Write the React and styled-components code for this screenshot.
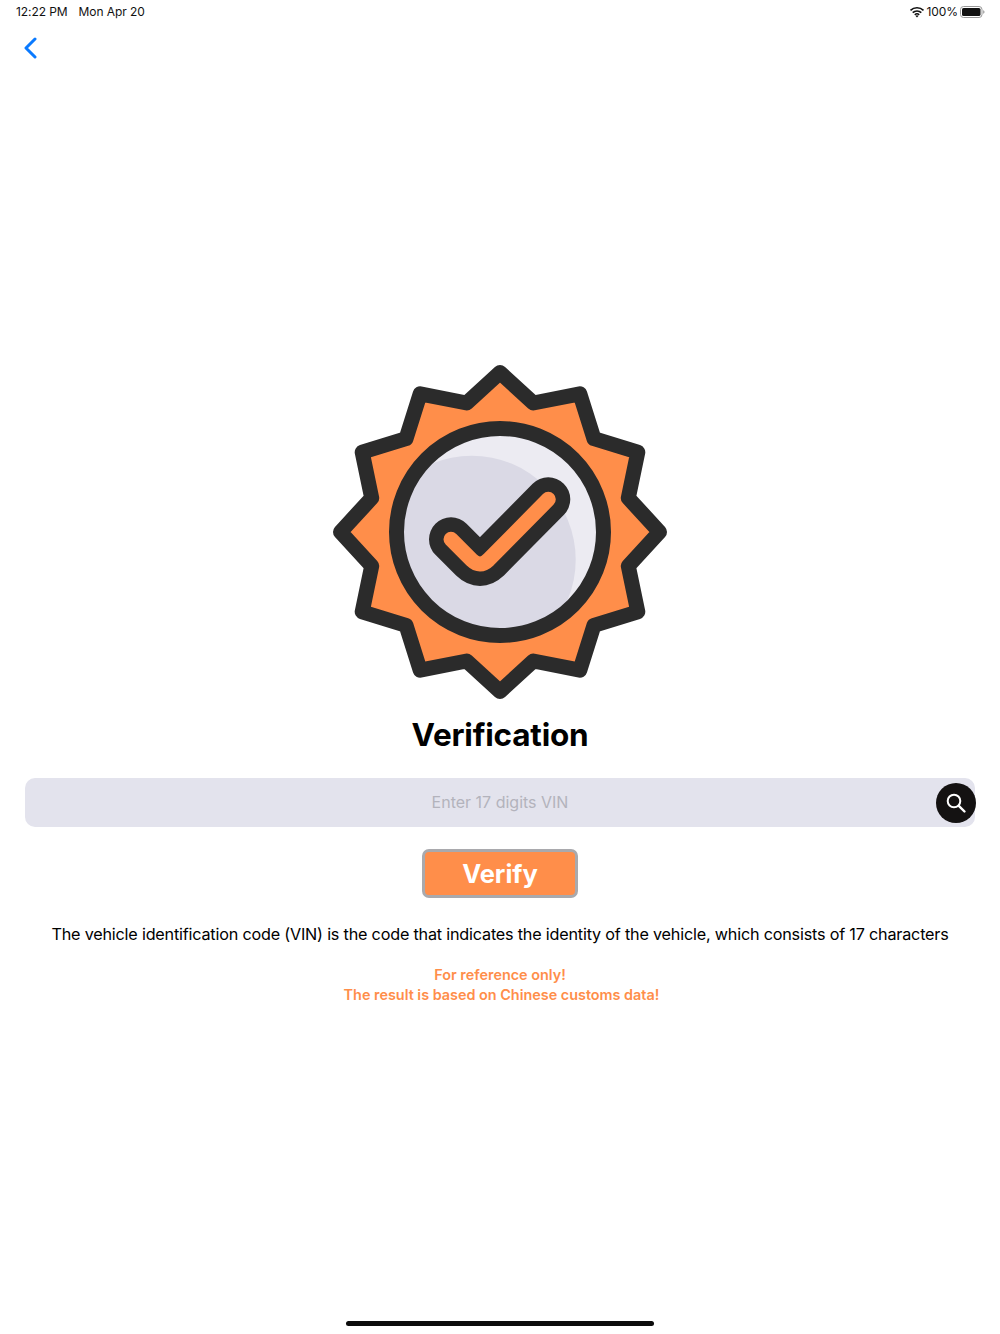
import React from "react";
import styled, { createGlobalStyle } from "styled-components";

const GlobalStyle = createGlobalStyle`
  html, body {
    margin: 0;
    padding: 0;
    background: #fff;
  }
  body {
    font-family: Inter, "Liberation Sans", sans-serif;
  }
`;

const Page = styled.div`
  width: 1000px;
  height: 1334px;
  display: flex;
  flex-direction: column;
  align-items: center;
  overflow: hidden;
  color: #000;
`;

const StatusBar = styled.div`
  width: 100%;
  height: 23px;
  box-sizing: border-box;
  padding: 0 15px 0 16px;
  display: flex;
  justify-content: space-between;
  align-items: center;
  font-size: 12px;
  letter-spacing: -0.08px;
  color: #111;
`;

const StatusGroup = styled.div`
  display: flex;
  align-items: center;
  gap: ${props => props.$gap || 0}px;
`;

const BackRow = styled.div`
  width: 100%;
  height: 49px;
  box-sizing: border-box;
  padding: 14px 0 0 24px;
`;

const Badge = styled.svg`
  display: block;
  width: 340px;
  height: 340px;
  margin-top: 290px;
`;

const Title = styled.h1`
  margin: 13px 0 0;
  font-size: 31.5px;
  line-height: 40px;
  font-weight: 700;
  letter-spacing: -0.2px;
`;

const SearchBar = styled.div`
  position: relative;
  width: 950px;
  height: 49px;
  margin-top: 23px;
  box-sizing: border-box;
  padding-bottom: 2px;
  display: flex;
  align-items: center;
  justify-content: center;
  background: #e3e3ed;
  border-radius: 10px;
  font-size: 16px;
  color: #b3b3bc;
`;

const SearchButton = styled.div`
  position: absolute;
  right: -1px;
  top: 5px;
  width: 40px;
  height: 40px;
  border-radius: 50%;
  background: #141212;
  display: flex;
  align-items: center;
  justify-content: center;
`;

const VerifyButton = styled.button`
  width: 156px;
  height: 49px;
  margin-top: 22px;
  box-sizing: border-box;
  background: #ff8e4a;
  border: 3px solid #a9a9ad;
  border-radius: 7px;
  color: #fff;
  font-family: inherit;
  font-size: 25.5px;
  font-weight: 700;
  padding: 0;
`;

const Description = styled.p`
  margin: 25px 0 0;
  font-size: 16.2px;
  line-height: 22px;
  letter-spacing: -0.2px;
  text-align: center;
  white-space: nowrap;
`;

const Notice = styled.div`
  margin-top: 20px;
  font-size: 14.4px;
  line-height: 20px;
  font-weight: 600;
  text-align: center;
  color: #ff8e4a;
`;

const NoticeLine = styled.div`
  padding-left: ${props => props.$indent || 0}px;
`;

const HomeIndicator = styled.div`
  width: 308px;
  height: 5px;
  margin-top: auto;
  margin-bottom: 8px;
  border-radius: 3px;
  background: #0c0c0c;
`;

const App = () => {
  return (
    <Page>
      <GlobalStyle />
      <StatusBar>
        <StatusGroup $gap={11}>
          <span>12:22 PM</span>
          <span>Mon Apr 20</span>
        </StatusGroup>
        <StatusGroup $gap={2}>
          <svg width="16" height="12" viewBox="0 0 16 12">
            <path d="M1.5 4.4a9.4 9.4 0 0 1 13 0M3.7 6.7a6.2 6.2 0 0 1 8.6 0M5.8 8.8a3.2 3.2 0 0 1 4.4 0" fill="none" stroke="#111" strokeWidth="1.6" />
            <path d="M6.6 10l1.4 1.6L9.4 10a2 2 0 0 0-2.8 0z" fill="#111" />
          </svg>
          <span>100%</span>
          <svg width="25" height="12" viewBox="0 0 25 12">
            <rect x="0.5" y="0.5" width="21.5" height="11" rx="3" fill="none" stroke="#999" />
            <rect x="2" y="2" width="18.5" height="8" rx="1.6" fill="#111" />
            <path d="M23.2 4.2c.9.3 1.3 1 1.3 1.8s-.4 1.5-1.3 1.8z" fill="#999" />
          </svg>
        </StatusGroup>
      </StatusBar>

      <BackRow>
        <svg width="14" height="22" viewBox="0 0 14 22" style={{ display: "block" }}>
          <path d="M11 2L2 11l9 9" fill="none" stroke="#0a7aff" strokeWidth="3" strokeLinecap="round" strokeLinejoin="round" />
        </svg>
      </BackRow>

      <Badge viewBox="0 0 340 340">
        <defs>
          <clipPath id="faceClip">
            <circle cx="170" cy="170" r="97" />
          </clipPath>
        </defs>
        <path
          d="M170 10.5L203.3 41L249.8 31.8L264 76.7L307.8 90.2L298.3 136L329.5 170L298.3 204L307.8 249.8L264 263.3L249.8 308.2L203.3 299L170 329.5L136.7 299L90.2 308.2L76 263.3L32.2 249.8L41.7 204L10.5 170L41.7 136L32.2 90.2L76 76.7L90.2 31.8L136.7 41Z"
          fill="#ff8e4a"
          stroke="#2b2b2b"
          strokeWidth="15"
          strokeLinejoin="round"
        />
        <circle cx="170" cy="170" r="97" fill="#ecebf2" />
        <circle cx="141.7" cy="197.7" r="104" fill="#dad9e5" clipPath="url(#faceClip)" />
        <circle cx="170" cy="170" r="103.5" fill="none" stroke="#2b2b2b" strokeWidth="15" />
        <path d="M121 177.3L141.7 198Q150 206 158.3 198L218.3 137.3" fill="none" stroke="#2b2b2b" strokeWidth="44" strokeLinecap="round" strokeLinejoin="round" />
        <path d="M121 177.3L141.7 198Q150 206 158.3 198L218.3 137.3" fill="none" stroke="#ff8e4a" strokeWidth="15" strokeLinecap="round" strokeLinejoin="round" />
      </Badge>

      <Title>Verification</Title>

      <SearchBar>
        Enter 17 digits VIN
        <SearchButton>
          <svg width="22" height="22" viewBox="0 0 22 22">
            <circle cx="9" cy="9" r="6.3" fill="none" stroke="#fff" strokeWidth="2" />
            <path d="M13.8 13.8L19.5 19.5" stroke="#fff" strokeWidth="2.4" strokeLinecap="round" />
          </svg>
        </SearchButton>
      </SearchBar>

      <VerifyButton>Verify</VerifyButton>

      <Description>
        The vehicle identification code (VIN) is the code that indicates the identity of the vehicle, which consists of 17 characters
      </Description>

      <Notice>
        <NoticeLine>For reference only!</NoticeLine>
        <NoticeLine $indent={3}>The result is based on Chinese customs data!</NoticeLine>
      </Notice>

      <HomeIndicator />
    </Page>
  );
};

export default App;
